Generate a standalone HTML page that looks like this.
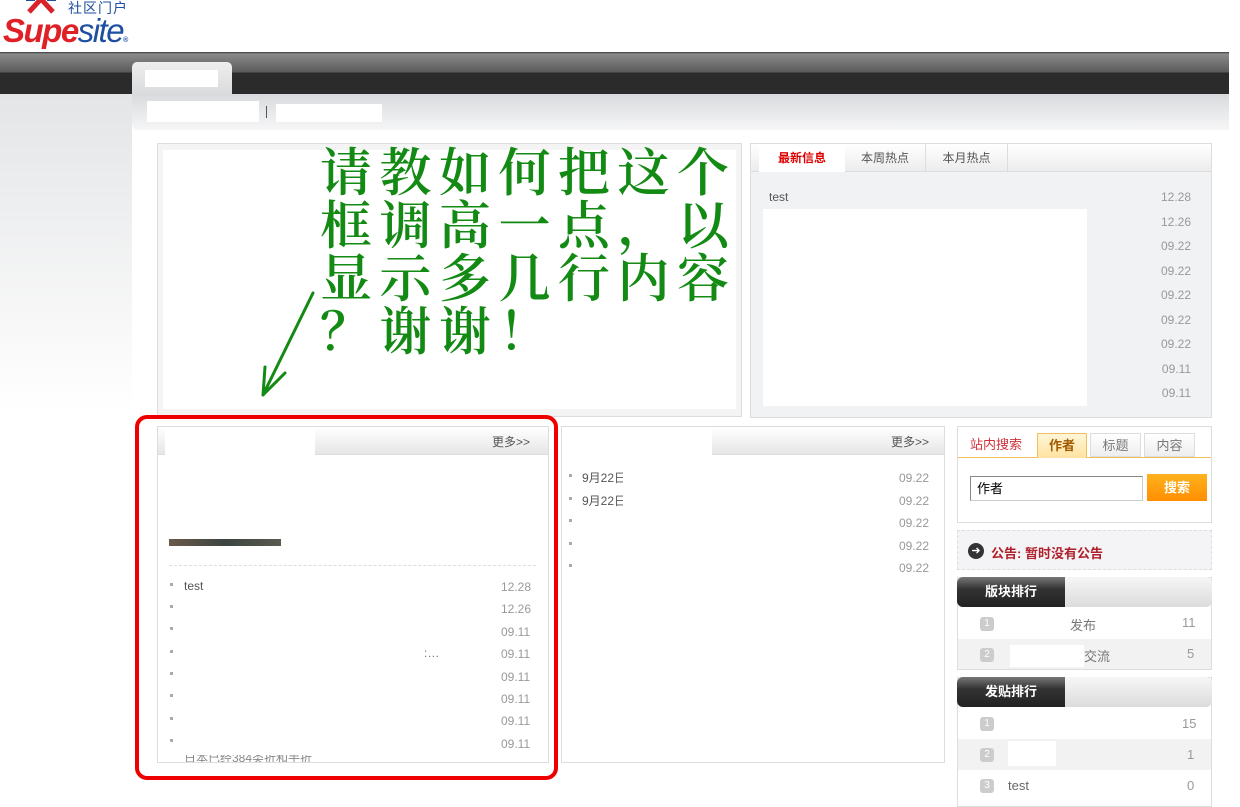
<!DOCTYPE html>
<html><head><meta charset="utf-8">
<style>
*{margin:0;padding:0;box-sizing:border-box}
body{width:1240px;height:800px;overflow:hidden;background:#fff;font-family:"Liberation Sans","Noto Sans CJK SC",sans-serif;font-size:12px;color:#555;position:relative}
.a{position:absolute}
.date{color:#999;font-size:12px}
.bul{position:absolute;width:3px;height:3px;background:#aaa}
</style></head><body>
<!-- logo -->
<div class="a" style="left:26px;top:-6px;width:30px;height:20px">
<svg width="34" height="22"><path d="M3 18 L15 5 L27 18" stroke="#d8232a" stroke-width="5" fill="none"/><rect x="0" y="0" width="9" height="7" fill="#1f4fa0"/><rect x="21" y="0" width="9" height="7" fill="#1f4fa0"/></svg></div>
<div class="a" style="left:68px;top:0;font-size:14px;color:#1f4fa0;letter-spacing:1px;line-height:16px">社区门户</div>
<div class="a" style="left:3px;top:12px;font-size:33px;font-style:italic;font-weight:bold;letter-spacing:-1.5px;line-height:38px"><span style="color:#e02027">Supe</span><span style="color:#1f4fa0;font-weight:normal">site</span><span style="color:#1f4fa0;font-size:7px">®</span></div>
<!-- nav -->
<div class="a" style="left:0;top:52px;width:1229px;height:42px;background:linear-gradient(#3a3a3a 0,#8a8a8a 2px,#5a5a5a 20px,#2b2b2b 21px,#2b2b2b 42px)"></div>
<div class="a" style="left:0;top:94px;width:132px;height:320px;background:linear-gradient(#e4e5e7,#fff)"></div>
<div class="a" style="left:132px;top:94px;width:1097px;height:36px;background:linear-gradient(#d8dadd,#f6f6f7);border-radius:0 0 0 6px"></div>
<div class="a" style="left:132px;top:62px;width:100px;height:34px;background:linear-gradient(#eee,#d9dadc);border-radius:5px 5px 0 0"></div>
<div class="a" style="left:145px;top:70px;width:73px;height:17px;background:#fff"></div>
<div class="a" style="left:147px;top:101px;width:112px;height:21px;background:#fff"></div>
<div class="a" style="left:266px;top:106px;width:1px;height:12px;background:#555"></div>
<div class="a" style="left:276px;top:104px;width:106px;height:18px;background:#fff"></div>
<!-- box1 -->
<div class="a" style="left:157px;top:143px;width:585px;height:274px;border:1px solid #ddd;background:#f4f4f4"></div>
<div class="a" style="left:163px;top:150px;width:573px;height:259px;background:#fff"></div>
<div class="a" style="left:320px;top:142px;font-family:'Noto Serif CJK SC','Liberation Serif',serif;font-weight:600;font-size:52px;line-height:53px;letter-spacing:7.5px;color:#138a13;width:440px">请教如何把这个<br>框调高一点，以<br>显示多几行内容<br>？谢谢！</div>
<svg class="a" style="left:255px;top:285px" width="70" height="120"><path d="M58 8 L8 110 M8 110 L10 82 M8 110 L30 88" stroke="#138a13" stroke-width="3" fill="none" stroke-linecap="round"/></svg>
<!-- box2 -->
<div class="a" style="left:750px;top:143px;width:462px;height:275px;border:1px solid #ddd;background:#f0f2f4"></div>
<div class="a" style="left:751px;top:144px;width:460px;height:28px;background:linear-gradient(#fff,#ececec);border-bottom:1px solid #ddd"></div>
<div class="a" style="left:759px;top:144px;width:86px;height:28px;background:#fff;color:#d00;font-weight:bold;font-size:12px;text-align:center;line-height:28px">最新信息</div>
<div class="a" style="left:845px;top:144px;width:81px;height:28px;border-right:1px solid #ddd;text-align:center;line-height:28px">本周热点</div>
<div class="a" style="left:926px;top:144px;width:82px;height:28px;border-right:1px solid #ddd;text-align:center;line-height:28px">本月热点</div>
<div class="a" style="left:769px;top:190px">test</div>
<div class="a" style="left:763px;top:209px;width:324px;height:197px;background:#fff"></div>
<div class="a date" style="left:1161px;top:185px;line-height:24.5px;text-align:right">12.28<br>12.26<br>09.22<br>09.22<br>09.22<br>09.22<br>09.22<br>09.11<br>09.11</div>
<!-- box3 -->
<div class="a" style="left:157px;top:426px;width:392px;height:337px;border:1px solid #ddd;background:#fff"></div>
<div class="a" style="left:158px;top:427px;width:390px;height:28px;background:linear-gradient(#fff,#e6e6e6);border-bottom:1px solid #ddd"></div>
<div class="a" style="left:165px;top:427px;width:150px;height:29px;background:#fff"></div>
<div class="a" style="left:492px;top:433px">更多&gt;&gt;</div>
<div class="a" style="left:169px;top:539px;width:112px;height:7px;background:linear-gradient(90deg,#6a5a4a,#3c4440,#5a5a50)"></div>
<div class="a" style="left:169px;top:565px;width:367px;border-top:1px dashed #ddd"></div>
<div class="a" style="left:184px;top:579px">test</div>
<div class="a" style="left:170px;top:583px;line-height:22.4px"><div class="bul" style="top:0"></div><div class="bul" style="top:22px"></div><div class="bul" style="top:44px"></div><div class="bul" style="top:67px"></div><div class="bul" style="top:89px"></div><div class="bul" style="top:111px"></div><div class="bul" style="top:134px"></div><div class="bul" style="top:156px"></div></div>
<div class="a" style="left:424px;top:646px;color:#777">:…</div>
<div class="a date" style="left:501px;top:576px;line-height:22.4px">12.28<br>12.26<br>09.11<br>09.11<br>09.11<br>09.11<br>09.11<br>09.11</div>
<div class="a" style="left:184px;top:755px;height:7px;overflow:hidden;color:#888;line-height:12px;font-size:12px"><div style="margin-top:-3px">日本已经384类折和手折</div></div>
<div class="a" style="left:135px;top:415px;width:423px;height:365px;border:4px solid #ee0000;border-radius:12px"></div>
<!-- box4 -->
<div class="a" style="left:561px;top:426px;width:384px;height:337px;border:1px solid #ddd;background:#fff"></div>
<div class="a" style="left:562px;top:427px;width:382px;height:28px;background:linear-gradient(#fff,#e6e6e6);border-bottom:1px solid #ddd"></div>
<div class="a" style="left:562px;top:427px;width:150px;height:29px;background:#fff"></div>
<div class="a" style="left:891px;top:433px">更多&gt;&gt;</div>
<div class="a" style="left:569px;top:474px"><div class="bul" style="top:0"></div><div class="bul" style="top:23px"></div><div class="bul" style="top:45px"></div><div class="bul" style="top:68px"></div><div class="bul" style="top:90px"></div></div>
<div class="a" style="left:582px;top:467px;line-height:23px">9月22日<br>9月22日</div>
<div class="a" style="left:623px;top:464px;width:40px;height:44px;background:#fff"></div>
<div class="a date" style="left:899px;top:467px;line-height:22.5px">09.22<br>09.22<br>09.22<br>09.22<br>09.22</div>
<!-- search -->
<div class="a" style="left:957px;top:426px;width:255px;height:97px;border:1px solid #ddd;background:#fff"></div>
<div class="a" style="left:958px;top:457px;width:253px;height:1px;background:#f0c060"></div>
<div class="a" style="left:970px;top:434px;color:#d0323a;font-size:13px">站内搜索</div>
<div class="a" style="left:1037px;top:433px;width:50px;height:25px;background:linear-gradient(#fff6d8,#ffe2a0);border:1px solid #f0c060;border-bottom:none;text-align:center;line-height:24px;font-weight:bold;font-size:13px;color:#a05a00">作者</div>
<div class="a" style="left:1090px;top:433px;width:51px;height:24px;background:linear-gradient(#fff,#eee);border:1px solid #ddd;text-align:center;line-height:24px;font-size:13px;color:#777">标题</div>
<div class="a" style="left:1144px;top:433px;width:51px;height:24px;background:linear-gradient(#fff,#eee);border:1px solid #ddd;text-align:center;line-height:24px;font-size:13px;color:#777">内容</div>
<div class="a" style="left:970px;top:476px;width:173px;height:25px;border:1px solid #888;border-right-color:#ccc;border-bottom-color:#ccc;padding-left:6px;line-height:23px;color:#000;font-size:13px">作者</div>
<div class="a" style="left:1147px;top:474px;width:60px;height:27px;background:linear-gradient(#ffb21e,#ff8e00);color:#fff;font-weight:bold;text-align:center;line-height:27px;font-size:13px">搜索</div>
<!-- notice -->
<div class="a" style="left:957px;top:530px;width:255px;height:40px;border:1px dashed #ddd;background:#f4f4f6"></div>
<div class="a" style="left:968px;top:543px;width:16px;height:16px;border-radius:50%;background:#333;color:#fff;font-size:11px;line-height:16px;text-align:center">➜</div>
<div class="a" style="left:991px;top:543px;color:#b0202a;font-weight:bold;font-size:13px">公告: 暂时没有公告</div>
<!-- rank1 -->
<div class="a" style="left:957px;top:577px;width:255px;height:93px;border:1px solid #ddd;background:#fff"></div>
<div class="a" style="left:957px;top:577px;width:255px;height:30px;background:linear-gradient(#f6f6f6,#dcdcdc);border-radius:6px"></div>
<div class="a" style="left:957px;top:577px;width:108px;height:30px;background:linear-gradient(#777,#333 40%,#222);border-radius:6px 0 0 6px;color:#fff;font-weight:bold;font-size:13px;line-height:30px;padding-left:28px">版块排行</div>
<div class="a" style="left:958px;top:639px;width:253px;height:30px;background:#f2f2f2"></div>
<div class="a" style="left:980px;top:617px;width:14px;height:14px;background:#ccc;border-radius:3px;color:#fff;font-size:10px;text-align:center;line-height:14px">1</div>
<div class="a" style="left:980px;top:648px;width:14px;height:14px;background:#ccc;border-radius:3px;color:#fff;font-size:10px;text-align:center;line-height:14px">2</div>
<div class="a" style="left:1070px;top:615px;font-size:13px;color:#777">发布</div>
<div class="a" style="left:1084px;top:646px;font-size:13px;color:#777">交流</div>
<div class="a" style="left:1010px;top:645px;width:74px;height:22px;background:#fff"></div>
<div class="a date" style="left:1182px;top:615px;font-size:13px">11</div>
<div class="a date" style="left:1187px;top:646px;font-size:13px">5</div>
<!-- rank2 -->
<div class="a" style="left:957px;top:677px;width:255px;height:130px;border:1px solid #ddd;background:#fff"></div>
<div class="a" style="left:957px;top:677px;width:255px;height:30px;background:linear-gradient(#f6f6f6,#dcdcdc);border-radius:6px"></div>
<div class="a" style="left:957px;top:677px;width:108px;height:30px;background:linear-gradient(#777,#333 40%,#222);border-radius:6px 0 0 6px;color:#fff;font-weight:bold;font-size:13px;line-height:30px;padding-left:28px">发贴排行</div>
<div class="a" style="left:958px;top:739px;width:253px;height:31px;background:#f2f2f2"></div>
<div class="a" style="left:1008px;top:741px;width:48px;height:25px;background:#fff"></div>
<div class="a" style="left:980px;top:717px;width:14px;height:14px;background:#ccc;border-radius:3px;color:#fff;font-size:10px;text-align:center;line-height:14px">1</div>
<div class="a" style="left:980px;top:748px;width:14px;height:14px;background:#ccc;border-radius:3px;color:#fff;font-size:10px;text-align:center;line-height:14px">2</div>
<div class="a" style="left:980px;top:779px;width:14px;height:14px;background:#ccc;border-radius:3px;color:#fff;font-size:10px;text-align:center;line-height:14px">3</div>
<div class="a" style="left:1008px;top:778px;font-size:13px;color:#666">test</div>
<div class="a date" style="left:1182px;top:716px;font-size:13px">15</div>
<div class="a date" style="left:1187px;top:747px;font-size:13px">1</div>
<div class="a date" style="left:1187px;top:778px;font-size:13px">0</div>
</body></html>
